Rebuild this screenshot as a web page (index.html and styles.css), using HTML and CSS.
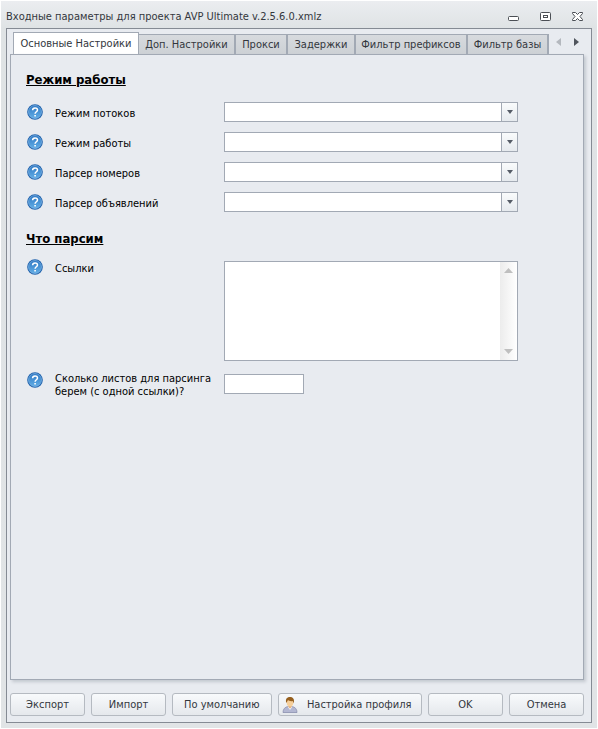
FILE: index.html
```
<!DOCTYPE html>
<html lang="ru">

<head>
  <meta charset="UTF-8">
  <meta name="viewport" content="width=device-width, initial-scale=1.0">
  <title>Входные параметры</title>
  <link rel="stylesheet" href="styles.css">
</head>

<body>
  <!-- shared icons -->
  <svg class="sprite" aria-hidden="true">
    <defs>
      <linearGradient id="blue" x1="0" y1="0" x2="0" y2="1">
        <stop offset="0" stop-color="#2f78c4"/>
        <stop offset="1" stop-color="#62aee6"/>
      </linearGradient>
      <symbol id="help" viewBox="0 0 16 16">
        <circle cx="8" cy="8" r="7.8" fill="#1f62ad"/>
        <circle cx="8" cy="8" r="6.5" fill="url(#blue)" stroke="#8fc0ea" stroke-width=".6"/>
        <path d="M5.6 6.2C5.6 3.2 10.5 3.2 10.5 6c0 1.7-2.400 1.800-2.400 3.800" fill="none" stroke="#fff" stroke-width="1.5"/>
        <path d="M7.3 10.9h1.6v1.6H7.3z" fill="#fff"/>
      </symbol>
    </defs>
  </svg>

  <div class="window">
    <header class="titlebar">
      <h1>Входные параметры для проекта AVP Ultimate v.2.5.6.0.xmlz</h1>
      <div class="controls">
        <button type="button" aria-label="Свернуть">
          <svg width="12" height="12" viewBox="0 0 12 12"><rect x=".5" y="5.5" width="10" height="4" rx="1" fill="#fff" stroke="#4b4f55"/></svg>
        </button>
        <button type="button" aria-label="Развернуть">
          <svg width="12" height="12" viewBox="0 0 12 12"><rect x=".5" y="1.5" width="10" height="8" rx="1" fill="#fff" stroke="#4b4f55"/><rect x="3.5" y="4.5" width="4" height="2" fill="none" stroke="#4b4f55"/></svg>
        </button>
        <button type="button" aria-label="Закрыть">
          <svg width="12" height="12" viewBox="0 0 12 12"><path d="M.5 1.5h3l2 2 2-2h3v1L8 5.5l2.5 3v1h-3l-2-2-2 2h-3v-1L3 5.5.5 2.5z" fill="#fff" stroke="#4b4f55"/></svg>
        </button>
      </div>
    </header>

    <main class="client">
      <nav class="tabs">
        <button type="button" class="tab active">Основные Настройки</button>
        <button type="button" class="tab tab-extra">Доп. Настройки</button>
        <button type="button" class="tab tab-proxy">Прокси</button>
        <button type="button" class="tab tab-delay">Задержки</button>
        <button type="button" class="tab tab-prefix">Фильтр префиксов</button>
        <button type="button" class="tab tab-base">Фильтр базы</button>
        <div class="scroller">
          <button type="button" aria-label="Назад" disabled><svg width="5" height="8" viewBox="0 0 5 8"><path d="M5 0v8L0 4z" fill="#b4b8be"/></svg></button>
          <button type="button" aria-label="Вперед"><svg width="5" height="8" viewBox="0 0 5 8"><path d="M0 0v8l5-4z" fill="#50555d"/></svg></button>
        </div>
      </nav>

      <form class="panel" id="settings">
        <h2>Режим работы</h2>
        <div class="row">
          <svg class="help"><use href="#help"/></svg>
          <label for="threads">Режим потоков</label>
          <div class="combo"><select id="threads"></select><span class="drop"></span></div>
        </div>
        <div class="row">
          <svg class="help"><use href="#help"/></svg>
          <label for="mode">Режим работы</label>
          <div class="combo"><select id="mode"></select><span class="drop"></span></div>
        </div>
        <div class="row">
          <svg class="help"><use href="#help"/></svg>
          <label for="phones">Парсер номеров</label>
          <div class="combo"><select id="phones"></select><span class="drop"></span></div>
        </div>
        <div class="row">
          <svg class="help"><use href="#help"/></svg>
          <label for="ads">Парсер объявлений</label>
          <div class="combo"><select id="ads"></select><span class="drop"></span></div>
        </div>

        <h2>Что парсим</h2>
        <div class="row row-top">
          <svg class="help"><use href="#help"/></svg>
          <label for="links">Ссылки</label>
          <div class="memo">
            <textarea id="links"></textarea>
            <div class="scrollbar">
              <svg width="9" height="5" viewBox="0 0 9 5"><path d="M0 5h9L4.5 0z" fill="#bfbfbf"/></svg>
              <svg width="9" height="5" viewBox="0 0 9 5"><path d="M0 0h9L4.5 5z" fill="#bfbfbf"/></svg>
            </div>
          </div>
        </div>
        <div class="row row-top">
          <svg class="help"><use href="#help"/></svg>
          <label for="pages">Сколько листов для парсинга берем (с одной ссылки)?</label>
          <input id="pages" type="text">
        </div>
      </form>

      <footer class="actions">
        <button type="button">Экспорт</button>
        <button type="button">Импорт</button>
        <button type="button" class="wide">По умолчанию</button>
        <button type="button" class="profile">
          <svg width="16" height="16" viewBox="0 0 16 16">
            <path d="M1 15.5c0-3.5 2-5.500 5-6h4c3 .5 5 2.500 5 6z" fill="#b3b7d2" stroke="#8a8fae" stroke-width=".8"/>
            <path d="M5.5 9.5L8 13l2.5-3.5z" fill="#f2f3fa"/>
            <path d="M6.500 8h3v2L8 11.500 6.500 10z" fill="#e3ae74"/>
            <ellipse cx="8" cy="5.5" rx="3.3" ry="4" fill="#f6cf9b"/>
            <path d="M4.3 6C3 1.5 5.5 0 8 0s5 1.5 3.700 6.500L10.800 4C9 4.500 7 4 6 3z" fill="#96601f"/>
          </svg>
          <span>Настройка профиля</span>
        </button>
        <button type="submit" form="settings">OK</button>
        <button type="button">Отмена</button>
      </footer>
    </main>
  </div>
</body>

</html>
```
FILE: styles.css
```
* {
  box-sizing: border-box;
}

body {
  margin: 0;
  background: #fff;
  font: 11px/13px "DejaVu Sans Condensed", "Noto Sans", sans-serif;
  color: #000;
}

button, input, select, textarea {
  margin: 0;
  font: inherit;
  color: inherit;
}

button {
  padding: 0;
  border: none;
  background: none;
  white-space: nowrap;
}

svg {
  display: block;
}

.sprite {
  position: absolute;
  width: 0;
  height: 0;
}

.window {
  display: flex;
  flex-direction: column;
  min-height: 100vh;
  padding: 0 5px 5px;
  border: 1px solid #fff;
  background: linear-gradient(#ebedf0, #dfe3e5 27px, #e1e4e6);
}

/* title bar */
.titlebar {
  display: flex;
  align-items: center;
  justify-content: space-between;
  height: 27px;
  padding-top: 4px;
}

.titlebar h1 {
  margin: 0;
  font-size: 11px;
  font-weight: normal;
  color: #33373d;
}

.controls {
  display: flex;
  gap: 20px;
  padding-right: 8px;
}

.client {
  display: flex;
  flex: 1;
  flex-direction: column;
  padding: 3px 7px 6px 3px;
  border: 1px solid #858b94;
  background: #e8ebf0;
}

/* tabs */
.tabs {
  display: flex;
  align-items: flex-end;
  height: 22px;
  padding-left: 3px;
}

.tab {
  width: 68px;
  height: 20px;
  border: 1px solid #a2a9b4;
  border-bottom: none;
  background: linear-gradient(#d7dade, #cdd1d5);
  color: #33373d;
}

.tab.active {
  width: 126px;
  height: 22px;
  background: #fff;
}

.tab-extra {
  width: 96px;
  border-left: none;
}

.tab-proxy {
  width: 52px;
}

.tab-prefix {
  width: 112px;
}

.tab-base {
  width: 82px;
  border-right-width: 2px;
}

.scroller {
  display: flex;
  gap: 13px;
  margin-left: auto;
  padding: 0 5px 8px 0;
}

/* settings */
.panel {
  flex: 1;
  padding: 15px;
  border: 1px solid #a2a9b4;
  box-shadow: 2px 2px 3px #c3c8cf;
}

.panel h2 {
  margin: 0 0 12px;
  font-size: 13px;
  line-height: 20px;
  text-decoration: underline;
}

.row + h2 {
  margin: 17px 0 10px;
}

.row {
  display: grid;
  grid-template-columns: 29px 169px minmax(0, 294px);
  align-items: start;
  margin-bottom: 10px;
}

.help {
  width: 16px;
  height: 16px;
  margin: 2px 0 0 1px;
}

.row label {
  padding: 5px 10px 0 0;
}

/* rows aligned by their first line */
.row-top .help {
  margin-top: 0;
}

.row-top label {
  padding-top: 3px;
}

.row-top .memo, .row-top input {
  margin-top: 2px;
}

.row-top:last-child {
  margin-top: 11px;
}

.row-top:last-child label {
  padding-top: 0;
}

.combo, .memo {
  position: relative;
}

.row input, .combo select, .memo textarea {
  display: block;
  width: 100%;
  height: 20px;
  padding: 2px 20px 2px 4px;
  border: 1px solid #a2a9b4;
  border-radius: 0;
  background: #fff;
  appearance: none;
}

.row input {
  width: 80px;
  padding-right: 4px;
}

.memo textarea {
  height: 100px;
  resize: none;
}

.drop {
  position: absolute;
  top: 1px;
  right: 1px;
  bottom: 1px;
  display: flex;
  align-items: center;
  justify-content: center;
  width: 16px;
  border-left: 1px solid #a2a9b4;
  background: linear-gradient(#f9fbfc, #e6eaee);
  pointer-events: none;
}

.drop::before {
  content: '';
  border: 3px solid transparent;
  border-top: 4px solid #555c66;
  border-bottom: none;
}

.scrollbar {
  position: absolute;
  top: 1px;
  right: 1px;
  bottom: 1px;
  display: flex;
  flex-direction: column;
  align-items: center;
  justify-content: space-between;
  width: 17px;
  padding: 6px 0;
  background: linear-gradient(90deg, #ececec, #fff);
}

/* bottom buttons */
.actions {
  display: flex;
  gap: 6px;
  margin-top: 13px;
}

.actions button {
  flex: 75 1 0;
  height: 23px;
  border: 1px solid #b5bac1;
  border-radius: 3px;
  background: linear-gradient(#f8fafc, #e5e8ec);
  color: #33373d;
}

.actions .wide {
  flex-grow: 100;
}

.actions .profile {
  display: flex;
  flex-grow: 143;
  align-items: center;
  padding-left: 3px;
}

.profile span {
  flex: 1;
}
```
